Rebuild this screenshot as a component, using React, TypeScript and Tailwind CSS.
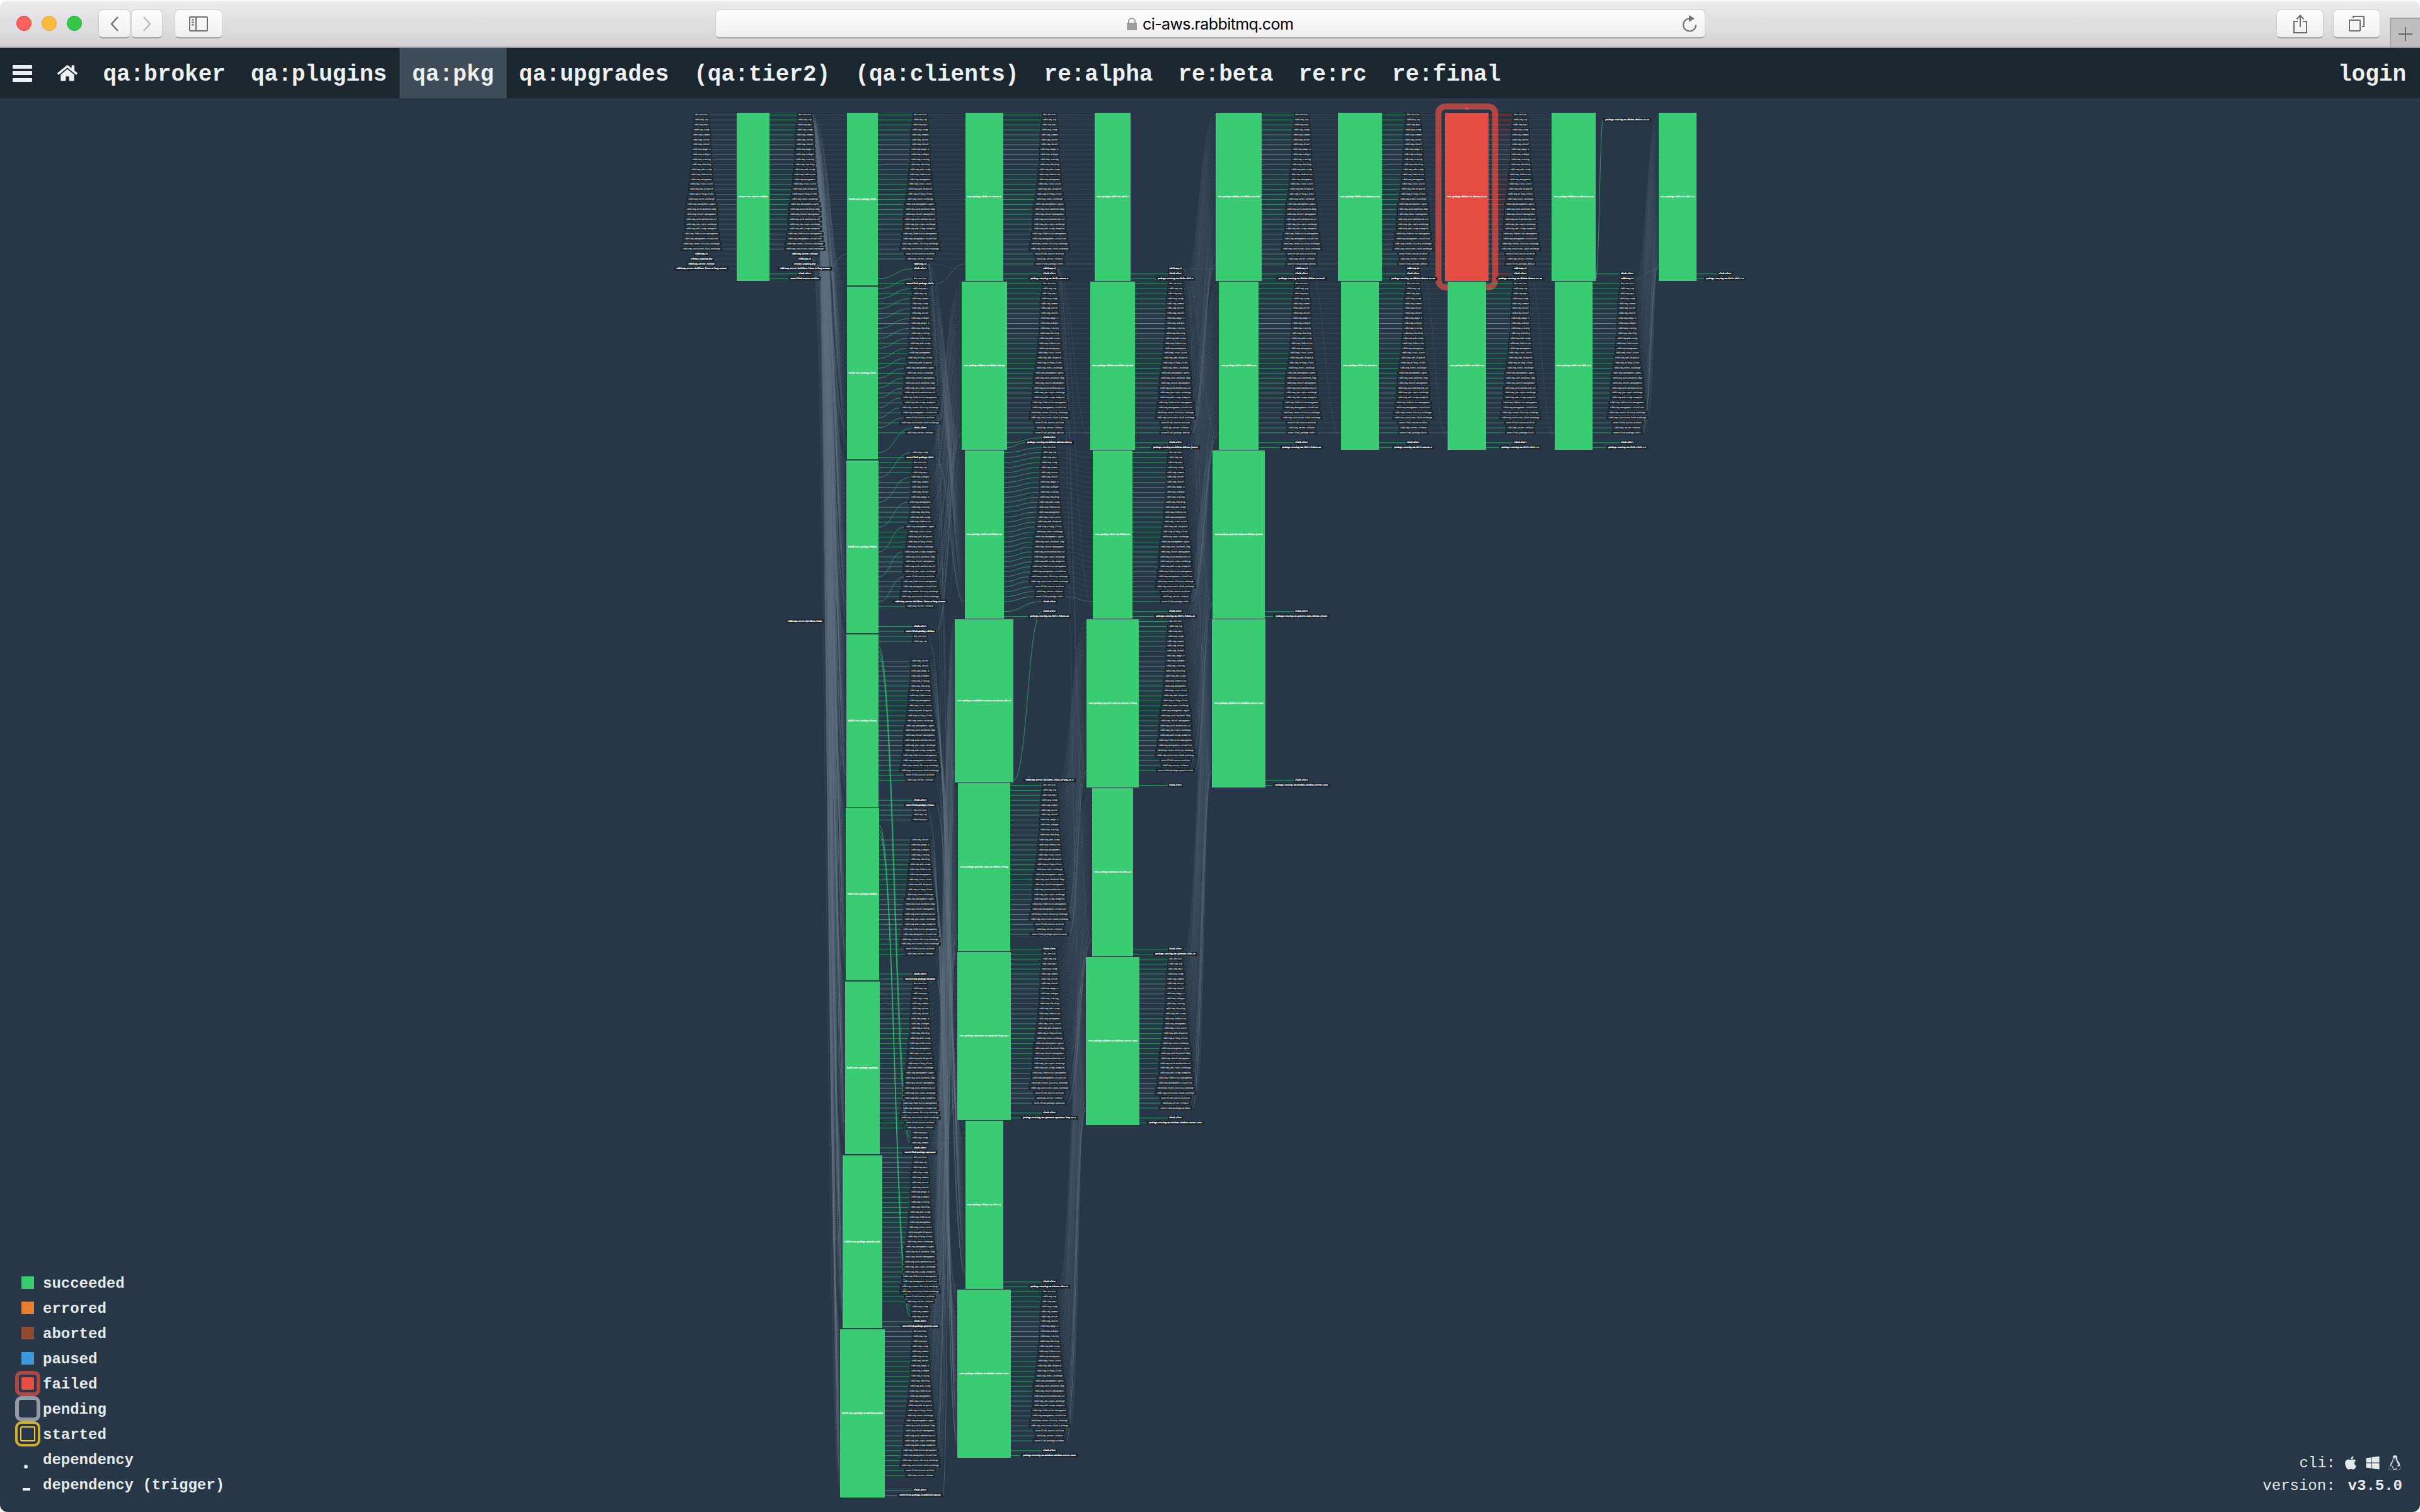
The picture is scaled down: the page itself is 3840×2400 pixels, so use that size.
import React from "react";
import { FaApple, FaHome, FaLinux, FaWindows } from "react-icons/fa";

/* ---------- pipeline data ---------- */

const REPOS = [
  "dev-version",
  "rabbitmq-top",
  "rabbitmq-mqtt",
  "rabbitmq-stomp",
  "rabbitmq-common",
  "rabbitmq-server",
  "rabbitmq-shovel",
  "rabbitmq-amqp1.0",
  "rabbitmq-codegen",
  "rabbitmq-tracing",
  "rabbitmq-sharding",
  "rabbitmq-web-stomp",
  "rabbitmq-federation",
  "rabbitmq-management",
  "rabbitmq-trust-store",
  "rabbitmq-web-dispatch",
  "rabbitmq-erlang-client",
  "rabbitmq-event-exchange",
  "rabbitmq-management-agent",
  "rabbitmq-auth-backend-ldap",
  "rabbitmq-shovel-management",
  "rabbitmq-auth-mechanism-ssl",
  "rabbitmq-jms-topic-exchange",
  "rabbitmq-web-stomp-examples",
  "rabbitmq-federation-management",
  "rabbitmq-management-visualiser",
  "rabbitmq-recent-history-exchange",
  "rabbitmq-consistent-hash-exchange",
];
const ARCHIVE = "unverified-source-archive";
const RELEASE = "rabbitmq-server-release";
const CI = "rabbitmq-ci";
const SLACK = "slack-alert";
const KEY = "release-signing-key";
const BUILDENV = "rabbitmq-server-buildenv-linux-erlang-R16B03";

const PITCH = 7.882;
const TOP = 179;
const rowY = (r: number) => TOP + 3.5 + PITCH * r;

/* Horizontal centres: jobs by column, then the resources each column puts out. */
const JOB_X: Record<string, number> = { A: 1195, B: 1368.5, C: 1561.5, D: 1765.5, E: 1965.5, F: 2158, G: 2327.5, H: 2497, I: 2662 };
const OUT_X: Record<string, number> = { A: 1277, B: 1460, C: 1665.2, D: 1865.2, E: 2065.3, F: 2242.4, G: 2412.4, H: 2582, I: 2737.3 };
const PREV: Record<string, string> = { B: "A", C: "B", D: "C", E: "D", F: "E", G: "F", H: "G", I: "H" };

type Out = { name: string; row: number; from: number | null; bright?: boolean };
type Job = {
  id: string;
  name: string;
  row: number;
  rows: number;
  width: number;
  source?: string;
  outs: Out[];
  failed?: boolean;
};

type Shift = (i: number) => number;
const none: Shift = () => 0;

/* Passed-through repositories plus the package the job verified. */
function passed(r0: number, pkg: string | null, shift: Shift = none): Out[] {
  const names = [...REPOS, ARCHIVE, RELEASE];
  if (pkg) names.push("unverified-package-" + pkg);
  return names.map((name, i) => ({ name, row: r0 + i + shift(i), from: r0 + i }));
}
const out = (name: string, row: number, from: number | null = row): Out => ({ name, row, from, bright: true });
const vm = (name: string) => "package-testing-vm-" + name;

const build = (id: string, pkg: string, row: number, rows: number, width: number, outs: Out[]): Job => ({
  id, name: "build-test-package-" + pkg, row, rows, width, source: "A1", outs,
});
const test = (id: string, name: string, row: number, width: number, source: string, outs: Out[], rows = 34): Job => ({
  id, name: "test-package-" + name, row, rows, width, source, outs,
});

const JOBS: Job[] = [
  {
    id: "A1", name: "create-test-source-archive", row: 0, rows: 34, width: 52,
    outs: [
      ...REPOS.map((name, i) => ({ name, row: i, from: i })),
      out(RELEASE, 28, null), out(CI, 29, null), out(KEY, 30, null), out(BUILDENV, 31, null),
      out(SLACK, 32), out(ARCHIVE, 33),
    ],
  },
  build("B1", "rhel6", 0, 35, 49, [...passed(0, null), out(CI, 30, null), out(SLACK, 31, 33), out("unverified-package-rhel6", 34)]),
  build("B2", "rhel7", 35, 35, 49, [...passed(35, null, (i) => (i % 2 === 0 ? -2 : 0)), out(SLACK, 63, 68), out("unverified-package-rhel7", 69)]),
  build("B3", "debian", 70, 35, 51, [...passed(70, null, (i) => (i % 5 === 3 ? -5 : 0)), out(BUILDENV, 98, null), out(SLACK, 103), out("unverified-package-debian", 104)]),
  build("B4", "sles11", 105, 35, 51, [...passed(105, null, (i) => (i >= 2 && i <= 4 ? 98 : 0)), out(SLACK, 138), out("unverified-package-sles11", 139)]),
  build("B5", "windows", 140, 35, 53, [...passed(140, null, (i) => (i >= 3 && i <= 5 ? 97 : 0)), out(SLACK, 173), out("unverified-package-windows", 174)]),
  build("B6", "opensuse", 175, 35, 55, [...passed(175, null), out(SLACK, 208), out("unverified-package-opensuse", 209)]),
  build("B7", "generic-unix", 210, 35, 63, [...passed(210, null), out(SLACK, 243), out("unverified-package-generic-unix", 244)]),
  build("B8", "standalone-macosx", 245, 34, 71, [...passed(245, null), out(SLACK, 277), out("unverified-package-standalone-macosx", 278)]),

  test("C1", "rhel6-on-centos-6", 0, 60, "B1", [...passed(0, "rhel6"), out(CI, 31, null), out(SLACK, 32), out(vm("rhel6-centos-6"), 33)]),
  test("C2", "debian-on-debian-wheezy", 34, 72, "B3", [...passed(34, "debian"), out(SLACK, 65, 66), out(vm("debian-debian-wheezy"), 66, 67)]),
  test("C3", "rhel7-on-fedora-24", 68, 62, "B2", [...passed(68, "rhel7", () => -1), out(SLACK, 98, 100), out(vm("rhel7-fedora-24"), 101)]),
  test("C4", "standalone-macosx-on-macosx-sierra", 102, 93, "B8", [out(SLACK, 100, 134), out("rabbitmq-server-buildenv-linux-erlang-19.0", 134, null)], 33),
  test("C5", "generic-unix-on-oldest-erlang", 135, 83, "B7", [...passed(135, "generic-unix"), out(SLACK, 168)]),
  test("C6", "opensuse-on-opensuse-leap-42.2", 169, 85, "B6", [...passed(169, "opensuse"), out(SLACK, 201), out(vm("opensuse-opensuse-leap-42.2"), 202)]),
  test("C7", "sles11-on-sles-11", 203, 60, "B4", [out(SLACK, 235), out(vm("sles11-sles-11"), 236)]),
  test("C8", "windows-on-windows-server-2008", 237, 85, "B5", [...passed(237, "windows"), out(SLACK, 269), out(vm("windows-windows-server-2008"), 270)]),

  test("D1", "rhel6-on-rhel-6", 0, 57, "C1", [out(CI, 31, null), out(SLACK, 32), out(vm("rhel6-rhel-6"), 33)]),
  test("D2", "debian-on-debian-jessie", 34, 71, "C2", [...passed(34, "debian"), out(SLACK, 66), out(vm("debian-debian-jessie"), 67)]),
  test("D3", "rhel7-on-fedora-23", 68, 63, "C3", [...passed(68, "rhel7"), out(SLACK, 100), out(vm("rhel7-fedora-23"), 101)]),
  test("D4", "generic-unix-on-latest-erlang", 102, 83, "C5", [...passed(102, "generic-unix"), out(SLACK, 135)]),
  test("D5", "opensuse-on-sles-12", 136, 65, "C6", [out(SLACK, 168), out(vm("opensuse-sles-12"), 169)]),
  test("D6", "windows-on-windows-server-2012", 170, 85, "C8", [...passed(170, "windows"), out(SLACK, 202), out(vm("windows-windows-server-2012"), 203)]),

  test("E1", "debian-on-debian-stretch", 0, 73, "D2", [...passed(0, "debian"), out(CI, 31, null), out(SLACK, 32), out(vm("debian-debian-stretch"), 33)]),
  test("E2", "rhel7-on-fedora-25", 34, 63, "D3", [...passed(34, "rhel7"), out(SLACK, 66), out(vm("rhel7-fedora-25"), 67)]),
  test("E3", "generic-unix-on-debian-jessie", 68, 83, "D4", [out(SLACK, 100), out(vm("generic-unix-debian-jessie"), 101)]),
  test("E4", "windows-on-windows-server-2016", 102, 85, "D6", [out(SLACK, 134), out(vm("windows-windows-server-2016"), 135)]),

  test("F1", "debian-on-ubuntu-14.04", 0, 70, "E1", [...passed(0, "debian"), out(CI, 31, null), out(SLACK, 32), out(vm("debian-ubuntu-14.04"), 33)]),
  test("F2", "rhel7-on-centos-7", 34, 60, "E2", [...passed(34, "rhel7"), out(SLACK, 66), out(vm("rhel7-centos-7"), 67)]),

  { ...test("G1", "debian-on-ubuntu-16.04", 0, 69, "F1", [...passed(0, "debian"), out(CI, 31, null), out(SLACK, 32), out(vm("debian-ubuntu-16.04"), 33)]), failed: true },
  test("G2", "rhel7-on-rhel-7.1", 34, 61, "F2", [...passed(34, "rhel7"), out(SLACK, 66), out(vm("rhel7-rhel-7.1"), 67)]),

  test("H1", "debian-on-ubuntu-16.10", 0, 70, "G1", [out(vm("debian-ubuntu-16.10"), 1, 33), out(SLACK, 32), out(CI, 33, null)]),
  test("H2", "rhel7-on-rhel-7.2", 34, 60, "G2", [...passed(34, "rhel7"), out(SLACK, 66), out(vm("rhel7-rhel-7.2"), 67)]),

  test("I1", "rhel7-on-rhel-7.3", 0, 60, "H2", [out(SLACK, 32), out(vm("rhel7-rhel-7.3"), 33)]),
];

type Label = { name: string; x: number; row: number; bright?: boolean };
type Edge = { x1: number; y1: number; x2: number; y2: number; kind: "green" | "red" | "solid" | "dashed" };

const labelWidth = (name: string) => Math.round(name.length * 1.93 + 2.5);

const INPUTS: Label[] = [
  ...REPOS.map((name, row) => ({ name, x: 1113, row })),
  { name: CI, x: 1113, row: 28, bright: true },
  { name: KEY, x: 1113, row: 29, bright: true },
  { name: RELEASE, x: 1113, row: 30, bright: true },
  { name: BUILDENV, x: 1113, row: 31, bright: true },
  { name: "rabbitmq-server-buildenv-linux", x: 1277, row: 102, bright: true },
];

function buildGraph() {
  const labels: Label[] = [...INPUTS];
  const edges: Edge[] = [];
  const byId: Record<string, Job> = {};
  JOBS.forEach((j) => (byId[j.id] = j));

  INPUTS.slice(0, 32).forEach((l) => {
    edges.push({ x1: l.x + labelWidth(l.name) / 2, y1: rowY(l.row), x2: 1169, y2: rowY(l.row), kind: l.bright ? "dashed" : "solid" });
  });
  edges.push({ x1: 1308, y1: rowY(102), x2: 1343, y2: rowY(102), kind: "dashed" });

  for (const job of JOBS) {
    const col = job.id[0];
    const right = JOB_X[col] + job.width / 2;
    const left = JOB_X[col] - job.width / 2;
    for (const o of job.outs) {
      labels.push({ name: o.name, x: OUT_X[col], row: o.row, bright: o.bright });
      if (o.from !== null) {
        edges.push({
          x1: right, y1: rowY(o.from),
          x2: OUT_X[col] - labelWidth(o.name) / 2, y2: rowY(o.row),
          kind: job.failed ? "red" : "green",
        });
      }
    }
    if (!job.source) continue;
    const src = byId[job.source];
    const sx = OUT_X[PREV[col]];
    const link = (name: string, fromRow: number, toRow: number, kind: "solid" | "dashed") =>
      edges.push({ x1: sx + labelWidth(name) / 2, y1: rowY(fromRow), x2: left, y2: rowY(toRow), kind });
    src.outs.forEach((o) => {
      if (o.name === SLACK || o.name.startsWith("package-testing")) return;
      let slot = REPOS.indexOf(o.name);
      let solid = false;
      if (o.name === ARCHIVE) { slot = 28; solid = src.id === "A1"; }
      else if (o.name === RELEASE) slot = 29;
      else if (o.name.startsWith("unverified-package")) { slot = 30; solid = true; }
      else if (o.name === KEY) slot = 30;
      else if (o.name === CI) slot = 31;
      else if (o.name === BUILDENV) slot = 32;
      link(o.name, o.row, job.row + slot, solid ? "solid" : "dashed");
    });
    /* The CI scripts come from one node that a whole column shares. */
    const head = byId[PREV[col] + "1"];
    const ci = head.outs.find((o) => o.name === CI);
    if (ci && src.id !== head.id) link(CI, ci.row, job.row + 31, "dashed");
  }
  return { labels, edges };
}

const { labels: LABELS, edges: EDGES } = buildGraph();

function edgePath(e: Edge) {
  if (e.y1 === e.y2) return `M${e.x1} ${e.y1}H${e.x2}`;
  const m = (e.x1 + e.x2) / 2;
  return `M${e.x1} ${e.y1}C${m} ${e.y1} ${m} ${e.y2} ${e.x2} ${e.y2}`;
}
const paths = (kind: Edge["kind"]) => EDGES.filter((e) => e.kind === kind).map((e, i) => <path key={i} d={edgePath(e)} />);

function Pipeline() {
  return (
    <svg className="absolute left-0 top-0 block h-[2244px] w-[3840px]" viewBox="0 156 3840 2244" fontFamily='"Liberation Mono", monospace' fontSize="3.03" textAnchor="middle">
      <rect x="2282.5" y="169" width="90" height="287" rx="11" fill="none" stroke="#ae4643" strokeWidth="9.6" />
      <path d="M2327.5 168.2l3.2 5.8h-6.4z" fill="#e54d42" />
      <g fill="none">
        <g stroke="#5d6d7e" strokeWidth="0.9" strokeOpacity="0.6" strokeDasharray="1.5 1.3">{paths("dashed")}</g>
        <g stroke="#5d6d7e" strokeWidth="1" strokeOpacity="0.75">{paths("solid")}</g>
        <g stroke="#2ecc71" strokeWidth="1" strokeOpacity="0.65">{paths("green")}</g>
        <g stroke="#e74c3c" strokeWidth="1" strokeOpacity="0.65">{paths("red")}</g>
      </g>
      {JOBS.map((j) => {
        const x = JOB_X[j.id[0]];
        const y = Math.round(TOP + PITCH * j.row);
        const h = Math.round(PITCH * j.rows - (j.rows === 35 ? 2 : 1.3));
        return (
          <g key={j.id}>
            <rect x={x - j.width / 2} y={y} width={j.width} height={h} fill={j.failed ? "#e54d42" : "#3acc73"} shapeRendering="crispEdges" />
            <text x={x} y={y + h / 2 + 0.7} fill="#ffffff" fontWeight="700" stroke="#ffffff" strokeWidth="0.25">{j.name}</text>
          </g>
        );
      })}
      {LABELS.map((l, i) => {
        const w = labelWidth(l.name);
        const y = rowY(l.row);
        return (
          <g key={i}>
            <rect x={l.x - w / 2} y={y - 3.3} width={w} height="6" fill="#1c262f" />
            <text
              x={l.x}
              y={y + 0.6}
              fill={l.bright ? "#ffffff" : "#d6dadd"}
              stroke={l.bright ? "#ffffff" : "#d6dadd"}
              strokeWidth={l.bright ? 0.22 : 0.14}
              fontWeight={l.bright ? "700" : "400"}
            >
              {l.name}
            </text>
          </g>
        );
      })}
    </svg>
  );
}

/* ---------- browser chrome ---------- */

const BUTTON =
  "flex h-[46px] items-center justify-center rounded-[7px] border border-[#cfcdcf] border-b-2 border-b-[#a5a4a5] bg-linear-to-b from-[#fdfdfd] to-[#f0f0f0]";

function Toolbar() {
  return (
    <div className="flex h-[76px] w-full items-start rounded-t-[12px] border-b-2 border-[#9b9a9b] border-t-2 border-t-[#f7f6f7] bg-linear-to-b from-[#edebed] to-[#d4d2d4]">
      <div className="flex w-[156px] gap-4 pl-[26px] pt-[23px]">
        <div className="size-6 rounded-full border border-[#e0443e] bg-[#fc605c]" />
        <div className="size-6 rounded-full border border-[#dea236] bg-[#fdbc40]" />
        <div className="size-6 rounded-full border border-[#27a93a] bg-[#34c84a]" />
      </div>
      <div className="flex gap-[1px] pt-[13px]">
        <div className={BUTTON + " w-[51px]"}>
          <svg className="h-6 w-4" viewBox="0 0 16 24" fill="none" stroke="#737373" strokeWidth="2.5"><path d="M13 1L3 12l10 11" /></svg>
        </div>
        <div className={BUTTON + " w-[50px]"}>
          <svg className="h-6 w-4" viewBox="0 0 16 24" fill="none" stroke="#bcbcbc" strokeWidth="2.5"><path d="M3 1l10 11L3 23" /></svg>
        </div>
      </div>
      <div className="ml-[19px] pt-[13px]">
        <div className={BUTTON + " w-[76px]"}>
          <svg className="h-6 w-[30px]" viewBox="0 0 30 24" fill="none" stroke="#6e6e6e" strokeWidth="2">
            <rect x="1" y="1" width="28" height="22" rx="1" />
            <path d="M11 1v22M4 5.500h4M4 9.500h4M4 13.500h4" />
          </svg>
        </div>
      </div>
      <div className="ml-[782px] pt-[13px]">
        <div className={BUTTON + " relative w-[1571px]"}>
          <div className="flex items-center gap-[9px]">
            <svg className="h-5 w-4" viewBox="0 0 16 20">
              <rect x="0" y="8" width="16" height="12" rx="1" fill="#9d9d9d" />
              <path d="M3 9V6a5 5 0 0 1 10 0v3" fill="none" stroke="#9d9d9d" strokeWidth="2" />
            </svg>
            <span className="w-[240px] whitespace-nowrap pt-px font-['Inter',sans-serif] text-[25px] leading-[30px] tracking-[-0.6px] text-black">ci-aws.rabbitmq.com</span>
          </div>
          <svg className="absolute right-3 top-[8px] h-[27px] w-6" viewBox="0 0 24 27" fill="none" stroke="#757575" strokeWidth="2.200">
            <path d="M12 5.500A10 10 0 1 0 22 15.500" />
            <path d="M11 0l9 5.500-9 5.500z" fill="#757575" stroke="none" />
          </svg>
        </div>
      </div>
      <div className="ml-auto flex items-start">
        <div className="flex gap-[15px] pr-[15px] pt-[13px]">
          <div className={BUTTON + " w-[75px]"}>
            <svg className="h-[30px] w-[22px]" viewBox="0 0 22 30" fill="none" stroke="#6e6e6e" strokeWidth="2">
              <path d="M7 11H1v18h20V11h-6M11 20V2M5.500 7.500L11 1.500l5.500 6" />
            </svg>
          </div>
          <div className={BUTTON + " w-[75px]"}>
            <svg className="h-[25px] w-[25px]" viewBox="0 0 25 25" fill="none" stroke="#6e6e6e" strokeWidth="2">
              <rect x="1" y="7" width="17" height="17" rx="1" />
              <path d="M7 4V1h17v16h-3" />
            </svg>
          </div>
        </div>
        <div className="mt-[26px] flex h-[46px] w-[48px] items-center justify-center border-l-2 border-t-2 border-[#a5a3a5] bg-[#bfbdbf] pt-1">
          <svg className="size-[22px]" viewBox="0 0 22 22" stroke="#686868" strokeWidth="2"><path d="M11 0v22M0 11h22" /></svg>
        </div>
      </div>
    </div>
  );
}

const TABS = ["qa:broker", "qa:plugins", "qa:pkg", "qa:upgrades", "(qa:tier2)", "(qa:clients)", "re:alpha", "re:beta", "re:rc", "re:final"];

function NavBar() {
  return (
    <nav className="flex h-20 w-full items-center bg-[#1c262f] text-[36px] font-bold leading-[85px] text-[#ecf0f1]">
      <div className="flex w-[72px] flex-col gap-[4.500px] pl-5">
        <div className="h-[6px] w-[31px] rounded-[1px] bg-[#ecf0f1]" />
        <div className="h-[6px] w-[31px] rounded-[1px] bg-[#ecf0f1]" />
        <div className="h-[6px] w-[31px] rounded-[1px] bg-[#ecf0f1]" />
      </div>
      <div className="flex w-[71.5px] pl-[19px]">
        <FaHome className="size-[32px]" />
      </div>
      {TABS.map((t) => (
        <div key={t} className={t === "qa:pkg" ? "h-20 bg-[#3e4b58] px-5" : "h-20 px-5"}>{t}</div>
      ))}
      <div className="ml-auto h-20 pr-[22px]">login</div>
    </nav>
  );
}

/* ---------- overlays ---------- */

function Legend() {
  const rows: [string, React.ReactNode][] = [
    ["succeeded", <div className="size-5 bg-[#3acc73]" />],
    ["errored", <div className="size-5 bg-[#e58032]" />],
    ["aborted", <div className="size-5 bg-[#8f4b2f]" />],
    ["paused", <div className="size-5 bg-[#3b99db]" />],
    ["failed", <div className="flex size-10 items-center justify-center rounded-[10px] border-[6px] border-[#ae4643]"><div className="size-5 rounded-[2px] bg-[#e54d42]" /></div>],
    ["pending", <div className="size-10 rounded-[10px] border-[6px] border-[#929ba3]" />],
    ["started", <div className="flex size-10 items-center justify-center rounded-[10px] border-4 border-[#d3ad30]"><div className="size-6 rounded-[3px] border-2 border-[#f3c62f]" /></div>],
    ["dependency", <div className="mr-[6px] mt-[24px] size-[6px] rounded-full bg-[#ecf0f1]" />],
    ["dependency (trigger)", <div className="mr-[5px] mt-[16px] h-[4px] w-[12px] bg-[#ecf0f1]" />],
  ];
  return (
    <div className="absolute bottom-[24px] left-[24px] flex flex-col">
      {rows.map(([name, swatch]) => (
        <div key={name} className="flex h-10 items-start">
          <div className="flex h-10 w-10 items-center justify-center">{swatch}</div>
          <div className="pl-1 text-[24px] font-bold leading-[43px] text-[#e6e9ea]">{name}</div>
        </div>
      ))}
    </div>
  );
}

function CliInfo() {
  return (
    <div className="absolute bottom-[23px] right-7 flex flex-col items-end text-[24px] leading-9 text-[#e6e9ea]">
      <div className="flex items-center">
        <span className="pr-3">cli:</span>
        <div className="flex items-center gap-[11px] pb-[3px]">
          <FaApple className="size-[24px]" />
          <FaWindows className="size-[24px]" />
          <FaLinux className="size-[24px]" />
        </div>
      </div>
      <div className="flex">
        <span className="pr-5">version:</span>
        <span className="font-bold">v3.5.0</span>
      </div>
    </div>
  );
}

export default function App() {
  return (
    <div className="h-[2400px] w-[3840px] overflow-hidden bg-white font-['Liberation_Mono',monospace]">
      <div className="flex h-full w-full flex-col overflow-hidden rounded-[12px]">
        <Toolbar />
        <NavBar />
        <main className="relative flex-1 bg-[#273747]">
          <Pipeline />
          <Legend />
          <CliInfo />
        </main>
      </div>
    </div>
  );
}
